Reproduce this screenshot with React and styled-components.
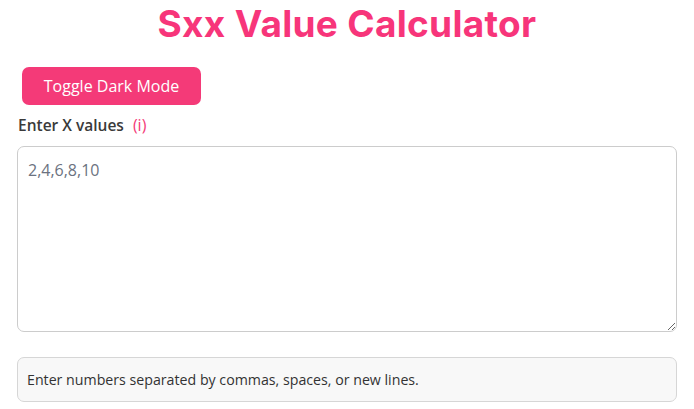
import React from "react";
import styled, { createGlobalStyle } from "styled-components";

const GlobalStyle = createGlobalStyle`
   body {
      margin: 0;
      background: #ffffff;
      font-family: "Open Sans", "Noto Sans", sans-serif;
   }
   * {
      box-sizing: border-box;
   }
`;

const Page = styled.div`
   padding: 0 17px;
   display: flex;
   flex-direction: column;
`;

const Title = styled.h1`
   margin: 0;
   padding-top: 2px;
   text-align: center;
   font-family: "Inter", sans-serif;
   font-weight: 700;
   font-size: 37px;
   line-height: 44px;
   color: #f7357a;
   letter-spacing: 0.3px;
`;

const ToggleButton = styled.button`
   align-self: flex-start;
   margin: 21px 0 0 5px;
   width: 179px;
   height: 38px;
   border: none;
   border-radius: 7px;
   background: #f43a78;
   color: #ffffff;
   font-family: "Open Sans", sans-serif;
   font-size: 16px;
   cursor: pointer;
`;

const Label = styled.label`
   margin: 9px 0 0 1px;
   display: flex;
   align-items: center;
   gap: 9px;
   font-size: 15.5px;
   font-weight: 600;
   color: #3a3a3a;
`;

const Info = styled.span`
   color: #f43a78;
   font-size: 16px;
   font-weight: 400;
`;

const Input = styled.textarea`
   margin-top: 10px;
   width: 100%;
   height: 186px;
   padding: 12px 10px;
   border: 1px solid #cccccc;
   border-radius: 7px;
   font-family: "Open Sans", sans-serif;
   font-size: 16px;
   color: #555;
   resize: vertical;
   &::placeholder {
      color: #6b7280;
   }
`;

const Hint = styled.div`
   margin-top: 25px;
   padding: 12px 9px;
   border: 1px solid #d6d6d6;
   border-radius: 7px;
   background: #f8f8f8;
   font-size: 14.2px;
   color: #333333;
`;

export default function App() {
   return (
      <>
         <GlobalStyle />
         <Page>
            <Title>Sxx Value Calculator</Title>
            <ToggleButton>Toggle Dark Mode</ToggleButton>
            <Label>
               Enter X values <Info>(i)</Info>
            </Label>
            <Input placeholder="2,4,6,8,10" />
            <Hint>Enter numbers separated by commas, spaces, or new lines.</Hint>
         </Page>
      </>
   );
}
